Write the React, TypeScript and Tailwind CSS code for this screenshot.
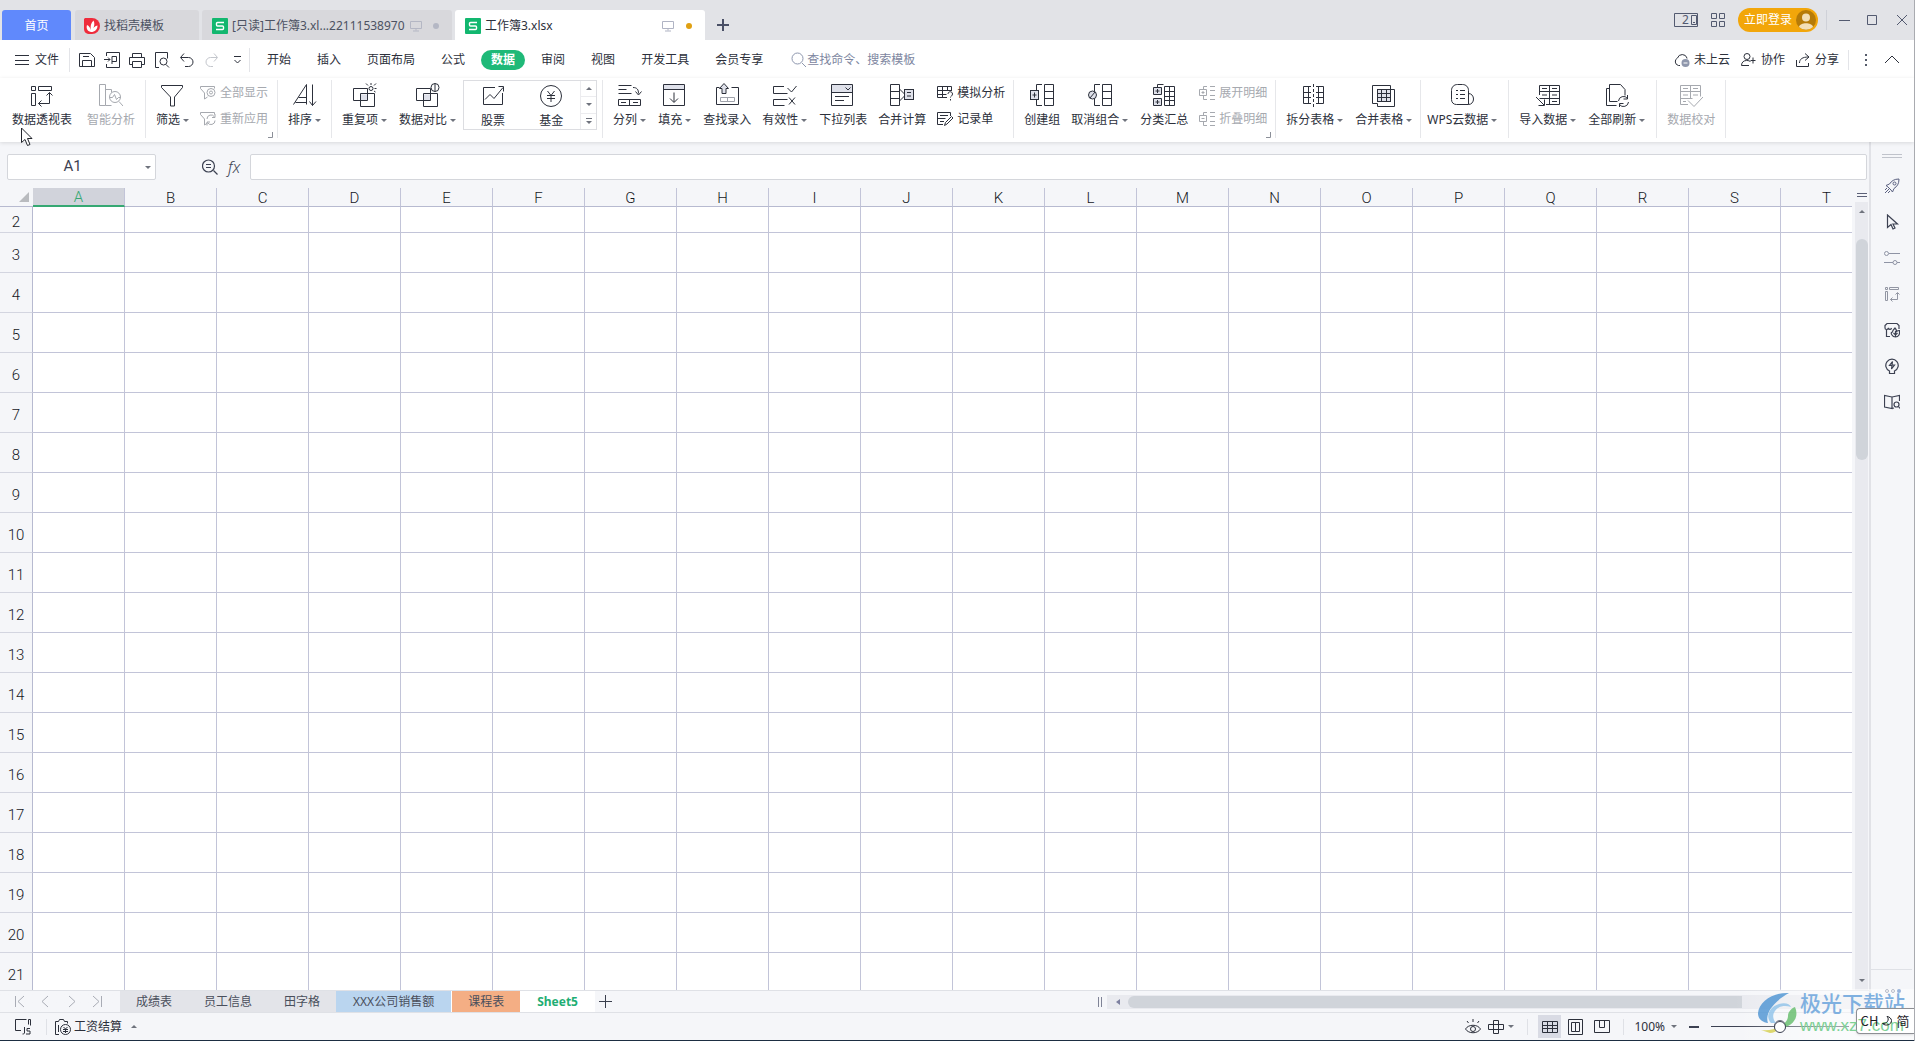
import React from "react";

type IconProps = { d?: string; size?: number; w?: number; h?: number; className?: string; sw?: number; children?: React.ReactNode };

function Icon({ d, size = 24, w, h, className = "", sw = 1, children }: IconProps) {
  const width = w ?? size;
  const height = h ?? size;
  return (
    <svg width={width} height={height} viewBox={`0 0 ${width} ${height}`} fill="none" stroke="currentColor" strokeWidth={sw} className={`shrink-0 ${className}`} aria-hidden="true">
      {d && <path d={d} />}
      {children}
    </svg>
  );
}

function Caret({ up = false }: { up?: boolean }) {
  return (
    <svg width="6" height="3" viewBox="0 0 6 3" className="shrink-0 fill-[#6f737d]" aria-hidden="true">
      <path d={up ? "M0 3L3 0L6 3Z" : "M0 0H6L3 3Z"} />
    </svg>
  );
}

const SHADE = "#dfe1ea";

const icons = {
  pivot: <Icon d="M1.5 3.5h4v4h-4zM8.5 3.5h13v4h-13zM1.5 10.5h4v12h-4zM19.5 9.5v11h-11M16.5 12.5l3-3 3 3M11.5 17.5l-3 3 3 3" />,
  smart: (
    <Icon d="M.5 1.5h6v21h-6zM6.5 6.5h6v3M6.5 22.5h6M20 18.5l4 4.500M10.500 14.500h3l2-3 2 5 2-2h2">
      <circle cx="16" cy="14" r="5.5" />
    </Icon>
  ),
  funnel: <Icon d="M.500 2.500h21v2l-8 9.500v9h-4v-9l-9-9.500z" />,
  sort: <Icon d="M.5 21.500L13.500 1.500v20M5.500 14.500h8M2.500 19.500h11M19.500 1.500v21M16.500 18.500l3 4 3.500-4" />,
  dup: (
    <Icon>
      <rect x="7.500" y="11.500" width="7" height="6" fill={SHADE} stroke="none" />
      <path d="M.500 5.500h14v12H.500zM7.500 10.500h14v13h-14z" />
      <circle cx="18" cy="5.500" r="2" fill="white" />
      <path d="M18 0v2M13 .500l2 2M23 .500l-2 2M21.500 5.500h2M21 8l1.500 1" />
    </Icon>
  ),
  compare: (
    <Icon>
      <rect x="7.500" y="11.500" width="7" height="6" fill={SHADE} stroke="none" />
      <path d="M.500 5.500h14v12H.500zM7.500 10.500h14v13h-14z" />
      <circle cx="19" cy="4.500" r="4" fill="white" />
      <path d="M19 .500v8" />
    </Icon>
  ),
  stock: <Icon d="M14 3.500H2.500v17h19V9M4 15.500l5-5 4 4 9-11M17.500 2.500h5v5" />,
  fund: (
    <Icon>
      <circle cx="12" cy="12" r="10.500" />
      <path d="M8.500 7l3.500 4.500L15.500 7M8 11.500h8M8 14.500h8M12 11.500V18" />
    </Icon>
  ),
  splitCol: <Icon d="M.5 2.500h13M.5 6.500h8M.5 10.500h13M15 4.500c4 0 5.500 2 5.500 6M17.500 8.500l3 3.500 3-3.500M.5 16.500h22v6H.5zM11.500 16.500v6M3 19.500h5M15 19.500h5" />,
  fill: (
    <Icon>
      <rect x="1" y="2" width="20" height="4" fill={SHADE} stroke="none" />
      <path d="M.500 1.500h21v21H.500zM.500 6.500h21M11 9.500v9.500M7 15.500l4 4 4-4" />
    </Icon>
  ),
  lookup: (
    <Icon>
      <path d="M4.500 4.500h-3v17h22v-17h-7" />
      <path d="M9 .500l4.500 5h-2.500v5H7v-5H4.500z" fill={SHADE} />
      <path d="M5.500 14.500h14v4h-14zM12.500 14.500v4" className="stroke-[#9fa2ab]" />
    </Icon>
  ),
  valid: <Icon d="M11 3.500H.5v7h14M14.500 16.500H.5v6h11M14.500 5l4 4 5-6M16 14.500l6 7M22 14.500l-6 7" />,
  dropdown: (
    <Icon>
      <rect x="1" y="2" width="20" height="7" fill={SHADE} stroke="none" />
      <path d="M.500 1.500h21v21H.500zM.500 9.500h21M14.500 4.500l2.500 2.500 2.500-2.500M4 13.500h14M4 17.500h9" />
    </Icon>
  ),
  consolidate: (
    <Icon>
      <path d="M.5 1.500h9v21h-9zM.5 8.500h9M.5 15.500h9M9.500 6l5 5M9.500 18l5-5" />
      <rect x="14.500" y="6.500" width="9" height="10" fill={SHADE} />
      <path d="M17 9.500h4M17 13h4" />
    </Icon>
  ),
  group: (
    <Icon>
      <path d="M12 1.500H6.500v21H12M14.500 1.500h9v21h-9zM14.500 8.500h9M14.500 15.500h9" />
      <rect x=".5" y="7.500" width="8" height="9" fill={SHADE} />
      <path d="M2.500 12h4M4.500 9.500v5" />
    </Icon>
  ),
  ungroup: (
    <Icon>
      <path d="M12 1.500H6.500v21H12M14.500 1.500h9v21h-9zM14.500 8.500h9M14.500 15.500h9" />
      <circle cx="4.500" cy="12" r="4" fill={SHADE} />
      <path d="M2 15l5-6" />
    </Icon>
  ),
  subtotal: (
    <Icon>
      <path d="M5.500 4V1.500h6M12.500 3.500h10v19h-10zM17.500 3.500v19M12.500 8.500h10M12.500 13.500h10M12.500 17.500h10" />
      <path d="M1.500 4.500h8v7h-8zM1.500 15.500h8v7h-8z" fill={SHADE} />
      <path d="M3.500 8h4M5.500 6v4M3.500 19h4M5.500 17v4" />
    </Icon>
  ),
  splitTable: (
    <Icon>
      <path d="M8 3.500H.500v17H8M.500 9.500H8M.500 14.500H8M13 3.500h7.500v17H13M13 9.500h7.500M13 14.500h7.500M5.500 3.500v17M15.500 3.500v17" />
      <path d="M10.500 1v23" strokeDasharray="3 2" />
    </Icon>
  ),
  mergeTable: (
    <Icon>
      <path d="M18.500 6.500V2.500H.500v18h5M18.500 6.500h4v17h-17v-3" />
      <rect x="5.500" y="6.500" width="13" height="12" fill={SHADE} />
      <path d="M5.500 10.500h13M5.500 14.500h13M9.500 6.500v12M14.500 6.500v12" />
    </Icon>
  ),
  cloudData: <Icon d="M17.500 21.500H5.500c-3 0-5-2-5-5V7.500c0-3.500 2.500-6 6-6h5c3.500 0 6 2.500 6 6zM17.500 10.500c3 0 5 2.500 5 5.500s-2 5.500-5 5.500M5 7.500h2M9 7.500h5M5 11.500h2M9 11.500h5M5 15.500h2M9 15.500h5" />,
  importData: <Icon d="M3.500 12V2.500h20v19H10M3.500 8.500h20M3.500 15.500h20M13.500 2.500v19M6 5.500h5M16 5.500h5M6 12h5M16 12h5M16 18.500h5M0 14l8 8M8.500 16.500v6h-6" />,
  refresh: <Icon d="M4.500 5.500h-3v17h10M4.500 1.500h11l4.500 5v6M4.500 1.500v17h8M13.500 18a5 5 0 0 1 9-2.500M22.500 12v4h-4M23.500 19a5 5 0 0 1-9 2.500M14.500 24.500v-4h4" />,
  proof: <Icon d="M9 21.500H1.500v-19h20v11M1.500 8.500h20M1.500 15.500h12M11.500 2.500v13M4 5.500h5M14 5.500h5M4 12h5M14 12h5M4 18.500h3M9 17.500l6 6L24 14" />,
};

const small = {
  showAll: (
    <Icon size={16} d="M4.500 8v6l3-2M.5 1.500h14v2M.5 1.500v2l4 4.500">
      <circle cx="11" cy="7.500" r="4" />
      <circle cx="11" cy="7.500" r="1.500" />
    </Icon>
  ),
  reapply: <Icon size={16} d="M4.500 8v6l3-2M.5 1.500h14v2M.5 1.500v2l4 4.500M7 8a4 4 0 0 1 7.500-2M15 3v3.500h-3M15 9.500a4 4 0 0 1-7.500 2M7 14.500V11h3" />,
  whatIf: <Icon size={16} d="M10 12.500H.5v-11h14V6M.5 5.500h14M.5 9.500h9M5.500 1.500v11M10.500 1.500v4M11 9c0-3 4.500-3 4.500 0 0 2-2 2-2 3.500M13.500 14v1.500" />,
  record: <Icon size={16} d="M6 13.500H.5v-12h13V5M3 4.500h8M.5 7.500h8M3 10.500h4M7.500 14.500l1-3 6-6 1.500 1.500-6 6z" />,
  expand: <Icon size={16} d="M8 1.500H4.500v3M4.500 10.500v4H8M.5 4.500h7v6h-7zM2.500 7.500h3M4 6v3M11 1.500h5M11 5.500h5M11 10.500h5M11 14.500h5" />,
  collapse: <Icon size={16} d="M8 1.500H4.500v3M4.500 10.500v4H8M.5 4.500h7v6h-7zM2.500 7.500h3M11 1.500h5M11 5.500h5M11 10.500h5M11 14.500h5" />,
};

function Tool({ icon, label, caret = false, off = false }: { icon: React.ReactNode; label: string; caret?: boolean; off?: boolean }) {
  return (
    <button disabled={off} className={`flex shrink-0 flex-col items-center gap-[5px] pt-[3px] ${off ? "text-[#a6a9af]" : "text-[#2c303b]"}`}>
      {icon}
      <span className="flex items-center whitespace-nowrap leading-4">
        {label}
        {caret && (
          <span className="ml-[3px] mr-px">
            <Caret />
          </span>
        )}
      </span>
    </button>
  );
}

function SmallTools({ items, off = false }: { items: [React.ReactNode, string][]; off?: boolean }) {
  return (
    <div className="flex shrink-0 flex-col gap-[10px] pt-[5px]">
      {items.map(([icon, label]) => (
        <button key={label} disabled={off} className={`flex items-center gap-1 whitespace-nowrap leading-4 ${off ? "text-[#a6a9af]" : "text-[#2c303b]"}`}>
          {icon}
          {label}
        </button>
      ))}
    </div>
  );
}

function Group({ className = "", corner = false, children }: { className?: string; corner?: boolean; children: React.ReactNode }) {
  return (
    <div className={`relative flex h-[58px] shrink-0 items-start border-r border-[#e6e7ea] ${className}`}>
      {children}
      {corner && <Icon size={6} d="M5.500 0v5.500H1" className="absolute bottom-0 right-1 text-[#8b8f98]" />}
    </div>
  );
}

function SheetLogo() {
  return (
    <svg width="16" height="16" viewBox="0 0 16 16" className="shrink-0" aria-hidden="true">
      <rect width="16" height="16" rx="1" fill="#12b76f" />
      <path d="M12 4.500H5.500a1 1 0 0 0-1 1V7a1 1 0 0 0 1 1h5a1 1 0 0 1 1 1v1.500a1 1 0 0 1-1 1H4" fill="none" stroke="white" strokeWidth="1.400" />
    </svg>
  );
}

const monitor = <Icon w={12} h={12} d="M.5 1.500h11v7H.5zM6 8.500v2M3 11h6" />;

function TitleBar() {
  return (
    <header className="flex h-10 items-end bg-[#e2e3e7] pl-0.5">
      <div role="tablist" className="flex h-[30px] items-stretch text-[#4c5262]">
        <button role="tab" className="w-[69px] rounded-t-[3px] bg-[#6089fc] pt-0.5 text-white">首页</button>
        <button role="tab" className="ml-1 flex w-[124px] items-center gap-1 rounded-t-[3px] bg-[#d8d8dc] pl-[9px] pt-0.5">
          <svg width="16" height="16" viewBox="0 0 16 16" aria-hidden="true">
            <path d="M1 0h7a8 8 0 0 1 0 16H6C2 16 0 14 0 11V1z" fill="#ef2c3c" />
            <path d="M7 14C3 13 2 10 3 7c2 1 3 2.500 4 5C6 8 7 5 9.500 2.500c1.500 3 1 6-1 9 1-2 2.500-3.500 5-4 0 4-2.500 6.500-6.500 6.500z" fill="white" />
          </svg>
          找稻壳模板
        </button>
        <button role="tab" className="ml-[3px] flex w-[250px] items-center gap-1 rounded-t-[3px] bg-[#d8d8dc] pl-[10px] pr-[13px] pt-0.5">
          <SheetLogo />
          <span className="w-[174px] whitespace-nowrap text-left">[只读]工作簿3.xl...22111538970</span>
          <span className="text-[#b4b7c4]">{monitor}</span>
          <span className="ml-auto size-[6px] rounded-full bg-[#b4b7c4]" />
        </button>
        <button role="tab" aria-selected="true" className="ml-[3px] flex w-[250px] items-center gap-1 rounded-t-[3px] bg-white pl-[10px] pr-[13px] pt-0.5 text-[#2c303b]">
          <SheetLogo />
          工作簿3.xlsx
          <span className="ml-auto mr-2 text-[#b0b4c4]">{monitor}</span>
          <span className="size-[6px] rounded-full bg-[#e0a012]" />
        </button>
      </div>
      <button aria-label="新建" className="ml-3 pb-[9px] text-[#4a5066]">
        <Icon size={12} sw={2} d="M6 0v12M0 6h12" />
      </button>
      <div className="ml-auto flex h-10 items-center text-[#535a70]">
        <button aria-label="设备" className="relative">
          <Icon w={24} h={14} d="M.5.5h23v13H.5zM17.500 2.500h5v9h-5zM19 9.500h2" />
          <span className="absolute left-2 top-0 leading-[14px]">2</span>
        </button>
        <button aria-label="应用" className="ml-[13px]">
          <Icon size={14} d="M.5.5h5v5h-5zM8.500.5h5v5h-5zM.5 8.500h5v5h-5zM8.500 8.500h5v5h-5z" />
        </button>
        <button className="ml-[13px] flex h-6 items-center gap-1 rounded-full bg-[#f2a60a] pl-1.5 pr-0.5 text-white">
          立即登录
          <svg width="20" height="20" viewBox="0 0 20 20" aria-hidden="true">
            <circle cx="10" cy="10" r="10" fill="#b67b08" />
            <circle cx="10" cy="7.500" r="4" fill="#f3dfb6" />
            <path d="M3 17c1-5 13-5 14 0a10 10 0 0 1-14 0z" fill="#f3dfb6" />
          </svg>
        </button>
        <span className="ml-2 h-5 w-px bg-[#cfd1d8]" />
        <button aria-label="最小化" className="ml-3"><Icon size={12} d="M0 6.500h11" /></button>
        <button aria-label="最大化" className="ml-4"><Icon size={12} d="M.5 1.500h9v9h-9z" /></button>
        <button aria-label="关闭" className="ml-[17px] mr-1.5"><Icon size={12} d="M1 1l10 10M11 1L1 11" /></button>
      </div>
    </header>
  );
}

const quick: [string, React.ReactNode][] = [
  ["保存", <Icon size={16} d="M.5 1.500h11l4 4v9H.5zM3.500 14.500v-6h9v6M4 4.500h6" />],
  ["输出PDF", <Icon size={16} d="M2.500 4V.5h13v15h-13V12M0 7.500h6M4 5.500l2 2-2 2M8 12V4.500h4.500v5H8" />],
  ["打印", <Icon size={16} d="M3.500 5.500v-4h9v4M3.500 12.500h-3v-7h15v7h-3M3.500 9.500h9v6h-9z" />],
  ["预览", (
    <Icon size={16} d="M5 15.500H1.500V.5h12v6M12 12.500l3 3">
      <circle cx="9.500" cy="9.500" r="3.500" />
    </Icon>
  )],
  ["撤销", <Icon size={16} d="M5 1.500l-3.500 4 3.500 4M2 5.500h7.500a4.500 4.500 0 0 1 0 9H6" />],
];

const menus = ["开始", "插入", "页面布局", "公式", "数据", "审阅", "视图", "开发工具", "会员专享"];

function MenuBar() {
  return (
    <nav className="flex h-[38px] items-center bg-white pl-[15px] pt-0.5 text-[#2c303b]">
      <button className="flex items-center gap-1.5">
        <Icon size={14} d="M0 2.500h14M0 7.500h14M0 11.500h14" />
        文件
      </button>
      <span className="ml-[10px] h-6 w-px bg-[#e3e4e8]" />
      <div className="ml-[9px] flex items-center gap-[9px]">
        {quick.map(([name, icon]) => (
          <button key={name} aria-label={name}>{icon}</button>
        ))}
        <button aria-label="恢复" className="text-[#c3c6cc]">
          <Icon size={16} d="M10 1.500l3.500 4-3.500 4M13 5.500H6.500a4.500 4.500 0 0 0 0 9H9" />
        </button>
        <button aria-label="更多"><Icon size={16} d="M5 4.500h7M5.500 8l3 3 3-3" /></button>
      </div>
      <span className="ml-1 h-6 w-px bg-[#e3e4e8]" />
      <div className="ml-[7px] flex items-center gap-1.5">
        {menus.map((m) => (
          <button key={m} className={m === "数据" ? "h-5 rounded-full bg-[#1fb978] px-[10px] font-bold text-white" : "h-5 whitespace-nowrap px-[10px]"}>{m}</button>
        ))}
      </div>
      <label className="ml-[18px] flex items-center text-[#8e97ae]">
        <Icon size={16} d="M11 11l4 4"><circle cx="6.500" cy="6.500" r="5.500" /></Icon>
        <input aria-label="搜索" placeholder="查找命令、搜索模板" className="w-[120px] bg-transparent outline-none placeholder:text-[#7d86a0]" />
      </label>
      <div className="ml-auto flex items-center">
        <button className="flex items-center gap-1">
          <Icon size={16} d="M6 13.500H4.500a4 4 0 0 1-1-7.500 5 5 0 0 1 9.500 0v.5">
            <circle cx="11.500" cy="11" r="4" fill="#8f97ac" stroke="none" />
            <path d="M9.500 11h4" className="stroke-white" />
          </Icon>
          未上云
        </button>
        <button className="ml-[11px] flex items-center gap-1">
          <Icon size={16} d="M8 13.500H.5C.5 10 3 8.500 5.500 8.500S9 9 9.500 10M12 5.500v6M9.500 8.500h5"><circle cx="6" cy="4.500" r="3" /></Icon>
          协作
        </button>
        <button className="ml-[10px] flex items-center gap-1">
          <Icon size={16} d="M1.500 8v6.500h12V11M4.500 11c0-4 3-6 9-6M10 1.500l4 3.500-4 3.500" />
          分享
        </button>
        <span className="ml-[9px] h-5 w-px bg-[#e3e4e8]" />
        <button aria-label="更多选项" className="ml-4 flex flex-col gap-[3px]">
          <span className="size-0.5 bg-[#555b6a]" />
          <span className="size-0.5 bg-[#555b6a]" />
          <span className="size-0.5 bg-[#555b6a]" />
        </button>
        <button aria-label="收起功能区" className="ml-[18px] mr-[15px]"><Icon size={14} d="M0 10l7-7 7 7" /></button>
      </div>
    </nav>
  );
}

function Ribbon() {
  return (
    <section className="relative z-10 flex h-16 bg-white pt-0.5 shadow-[0_1px_4px_rgba(0,0,0,0.12)]">
      <Group className="gap-[15px] pl-3 pr-[10px]">
        <Tool icon={icons.pivot} label="数据透视表" />
        <Tool icon={icons.smart} label="智能分析" off />
      </Group>
      <Group className="gap-[10px] pl-[10px] pr-[9px]" corner>
        <Tool icon={icons.funnel} label="筛选" caret />
        <SmallTools off items={[[small.showAll, "全部显示"], [small.reapply, "重新应用"]]} />
      </Group>
      <Group className="pl-[10px] pr-[9px]">
        <Tool icon={icons.sort} label="排序" caret />
      </Group>
      <Group className="gap-[11px] pl-[10px] pr-[5px]">
        <Tool icon={icons.dup} label="重复项" caret />
        <div className="flex gap-1.5">
          <Tool icon={icons.compare} label="数据对比" caret />
          <div className="flex h-[50px] w-[134px] border border-[#dcdde1] pl-[17px]">
            <div className="flex gap-[34px]">
              <Tool icon={icons.stock} label="股票" />
              <Tool icon={icons.fund} label="基金" />
            </div>
            <div className="ml-auto flex w-4 flex-col divide-y divide-[#ececef] border-l border-[#ececef]">
              <button aria-label="上一行" className="flex flex-1 items-center justify-center"><Caret up /></button>
              <button aria-label="下一行" className="flex flex-1 items-center justify-center"><Caret /></button>
              <button aria-label="展开" className="flex flex-1 flex-col items-center justify-center gap-0.5">
                <span className="h-px w-[6px] bg-[#6f737d]" />
                <Caret />
              </button>
            </div>
          </div>
        </div>
      </Group>
      <Group className="gap-[11px] pl-[10px] pr-[8px]">
        <Tool icon={icons.splitCol} label="分列" caret />
        <Tool icon={icons.fill} label="填充" caret />
        <Tool icon={icons.lookup} label="查找录入" />
        <Tool icon={icons.valid} label="有效性" caret />
        <Tool icon={icons.dropdown} label="下拉列表" />
        <Tool icon={icons.consolidate} label="合并计算" />
        <SmallTools items={[[small.whatIf, "模拟分析"], [small.record, "记录单"]]} />
      </Group>
      <Group className="gap-[11px] pl-[10px] pr-[8px]" corner>
        <Tool icon={icons.group} label="创建组" />
        <Tool icon={icons.ungroup} label="取消组合" caret />
        <Tool icon={icons.subtotal} label="分类汇总" />
        <SmallTools off items={[[small.expand, "展开明细"], [small.collapse, "折叠明细"]]} />
      </Group>
      <Group className="gap-[11px] pl-[10px] pr-[7px]">
        <Tool icon={icons.splitTable} label="拆分表格" caret />
        <Tool icon={icons.mergeTable} label="合并表格" caret />
      </Group>
      <Group className="pl-[6px] pr-[10px]">
        <Tool icon={icons.cloudData} label="WPS云数据" caret />
      </Group>
      <Group className="gap-[11px] px-[10px]">
        <Tool icon={icons.importData} label="导入数据" caret />
        <Tool icon={icons.refresh} label="全部刷新" caret />
      </Group>
      <Group className="px-[10px]">
        <Tool icon={icons.proof} label="数据校对" off />
      </Group>
    </section>
  );
}

function FormulaBar() {
  return (
    <div className="flex h-[46px] items-center pl-[7px] pr-0.5 pt-1 text-[#3c4152]">
      <div className="flex h-[26px] w-[149px] items-center rounded-[2px] border border-[#d4d6db] bg-white pr-1">
        <input aria-label="名称框" defaultValue="A1" className="w-full bg-transparent pr-2 text-center font-[Roboto] text-[15px] outline-none" />
        <button aria-label="名称列表"><Caret /></button>
      </div>
      <button aria-label="查看公式" className="ml-[46px]">
        <Icon size={16} d="M11.500 11.500l4 4M4 5.500h5M4 8.500h5" sw={1.2}><circle cx="6.500" cy="7" r="6" /></Icon>
      </button>
      <button aria-label="插入函数" className="ml-[10px] font-['Noto_Sans'] text-base font-light italic leading-5">fx</button>
      <input aria-label="编辑栏" className="ml-[10px] h-[26px] flex-1 rounded-[2px] border border-[#d4d6db] bg-white px-2 outline-none" />
    </div>
  );
}

const columns = "ABCDEFGHIJKLMNOPQRST".split("");
const rows = Array.from({ length: 20 }, (_, i) => i + 2);

function Grid() {
  return (
    <div className="min-w-0 flex-1 overflow-hidden">
      <table className="w-[1873px] table-fixed border-separate border-spacing-0 font-[Roboto] text-[15px] text-[#14161d]">
        <colgroup>
          <col className="w-[33px]" />
          {columns.map((c) => <col key={c} className="w-[92px]" />)}
        </colgroup>
        <thead>
          <tr className="h-[19px]">
            <th className="border-b border-[#b7bad0] p-0">
              <svg width="10" height="10" viewBox="0 0 10 10" className="ml-auto mr-1 fill-[#b9bbbf]" aria-hidden="true"><path d="M10 0V10H0Z" /></svg>
            </th>
            {columns.map((c) => (
              <th key={c} scope="col" className={c === "A" ? "border-b-2 border-r border-b-[#36a873] border-r-[#c2c4d8] bg-[#d1d3db] p-0 pt-0.5 font-light leading-[15px] text-[#36a873]" : "border-b border-r border-b-[#b7bad0] border-r-[#c2c4d8] p-0 pt-[3px] font-light leading-[15px]"}>{c}</th>
            ))}
          </tr>
        </thead>
        <tbody>
          {rows.map((r) => (
            <tr key={r} className={r === 2 ? "h-[26px]" : "h-10"}>
              <th scope="row" className="border-b border-r border-b-[#d3d5e0] border-r-[#b7bad0] p-0 pt-1 font-light leading-5">{r}</th>
              {columns.map((c) => <td key={c} className="border-b border-r border-[#c2c4d8] bg-white p-0" />)}
            </tr>
          ))}
        </tbody>
      </table>
    </div>
  );
}

function VerticalScroll() {
  return (
    <div className="ml-[3px] mr-px flex w-[13px] flex-col items-center text-[#5b6077]">
      <Icon w={10} h={14} d="M0 5.500h10M0 8.500h10" />
      <div className="flex w-full flex-1 flex-col items-center bg-[#e9eaef]">
        <button aria-label="向上滚动" className="flex h-[18px] items-center"><Caret up /></button>
        <div className="mt-[19px] h-[28%] w-3 rounded-full bg-[#d0d4da]" />
        <button aria-label="向下滚动" className="mt-auto flex h-5 items-center"><Caret /></button>
      </div>
    </div>
  );
}

const sheets: [string, string][] = [
  ["成绩表", "px-4 bg-[#e3e4e9]"],
  ["员工信息", "px-4 bg-[#e3e4e9]"],
  ["田字格", "px-4 bg-[#e3e4e9]"],
  ["XXX公司销售额", "px-[17px] bg-[#bad5ef]"],
  ["课程表", "px-4 bg-[#f4ae84] border-l border-white"],
  ["Sheet5", "px-[17px] bg-white font-bold text-[#1fae74]"],
];

function SheetBar() {
  return (
    <div className="flex h-[23px] items-stretch border-y border-[#dfe1e6] text-[#4a4f5c]">
      <div className="flex w-[120px] items-center gap-[13px] bg-gradient-to-r from-[#f5f6f9] to-[#f5f6f9] pl-[13px] text-[#a9acb5]">
        <button aria-label="第一张"><Icon size={13} d="M2.500 1v11M11 1L5 6.500 11 12" /></button>
        <button aria-label="上一张"><Icon size={13} d="M9 1L3 6.500 9 12" /></button>
        <button aria-label="下一张"><Icon size={13} d="M4 1l6 5.500L4 12" /></button>
        <button aria-label="最后一张"><Icon size={13} d="M2 1l6 5.500L2 12M10.500 1v11" /></button>
      </div>
      {sheets.map(([name, style]) => (
        <button key={name} className={`whitespace-nowrap ${style}`}>{name}</button>
      ))}
      <button aria-label="新建工作表" className="ml-1 text-[#3a3f4d]"><Icon size={13} d="M6.500 0v13M0 6.500h13" /></button>
      <div className="ml-auto flex w-[771px] items-center text-[#7f8396]">
        <Icon w={6} h={10} d="M.5 0v10M3.500 0v10" />
        <div className="ml-[3px] flex h-[14px] flex-1 items-center bg-[#e9eaef]">
          <button aria-label="向左滚动" className="flex w-[21px] justify-center">
            <svg width="4" height="6" viewBox="0 0 4 6" className="fill-[#7d80a0]" aria-hidden="true"><path d="M4 0V6L0 3Z" /></svg>
          </button>
          <div className="h-3 w-[614px] rounded-l-full bg-[#d0d4da]" />
        </div>
      </div>
    </div>
  );
}

function Sidebar() {
  return (
    <aside className="flex w-[45px] shrink-0 flex-col items-center border-l-2 border-[#e1e2e7] pr-0.5 pt-3 text-[#3c4152]">
      <Icon w={20} h={4} d="M0 .5h20M0 3.500h20" className="text-[#c0c3cb]" />
      <div className="mt-5 flex flex-col gap-5">
        <button aria-label="助手" className="text-[#5a6080]">
          <Icon size={16} d="M15 1C10 1 7.500 3 5.500 6L2 7.500l2 1.500 3 3 1.500 2L10 10.500C13 8.500 15 6 15 1zM1 12l2-2M1 15l4-4M4 15l2-2"><circle cx="10.500" cy="5.500" r="1.500" /></Icon>
        </button>
        <button aria-label="选择"><Icon size={16} sw={1.2} d="M3.500 1v12.500l3.500-3 2 4.500 2-1-2-4h4.500z" /></button>
        <button aria-label="属性" className="text-[#8f94a5]">
          <Icon size={16} d="M5 3.500h11M0 12.500h9M13 12.500h3"><circle cx="2.500" cy="3.500" r="2" /><circle cx="11" cy="12.500" r="2" /></Icon>
        </button>
        <button aria-label="透视表" className="text-[#9296a3]">
          <Icon size={16} d="M1.500 1.500h2v2h-2zM5.500 1.500h9v2h-9zM1.500 5.500h2v9h-2zM13.500 7v6.500h-7M11.500 8.500l2-2 2 2M8.500 11.500l-2 2 2 2" />
        </button>
        <button aria-label="模板">
          <Icon size={16} sw={1.2} d="M6 14.500H2.500V8M15 7V3.500l-2-2H3l-2 2V6c0 2 3 2 3.500 0 .5 2 2.500 2 3 0M8 13c-1.500-2-.5-3 .5-3 0-1 1-2.500 2.500-4 1 1 1.500 2 1.500 3.500 1-1 2-1 3-1 .5 4-1 6.500-4 6.500-2 0-3-1-3.500-2zM11.500 9v6M9.500 11l2 2 2-2" />
        </button>
        <button aria-label="灵感">
          <Icon size={16} sw={1.2} d="M5.500 15.500h5V13a6.200 6.200 0 1 0-5 0zM8.500 3.500l-3 4h2.500l-.5 3.500 3-4H8z" />
        </button>
        <button aria-label="查阅">
          <Icon size={16} sw={1.2} d="M8 3L.5 1.500v11.500L8 14.500zM8 3l7.500-1.500V7M8 14.500l2-.5M14.500 12.500L16 14.500"><circle cx="12.500" cy="10.500" r="2.500" /></Icon>
        </button>
      </div>
      <div className="mt-auto flex h-11 w-full items-center justify-center gap-0.5 border-t border-[#dfe1e6] pb-0.5 pl-0.5">
        <span className="size-1 rounded-full border border-[#6f7790]" />
        <span className="size-1 rounded-full border border-[#6f7790]" />
        <span className="size-1 rounded-full bg-[#2f66b5]" />
      </div>
    </aside>
  );
}

function StatusBar() {
  return (
    <footer className="flex h-7 items-center border-b border-[#1d2e42] bg-[#f5f6f9] pl-[15px] text-[#2c303b]">
      <button aria-label="宏"><Icon size={16} d="M6 11.500H.5v-11h11M13.500.5h2v6M13.500.5v5M9.500 8v6c0 1-2 1-2 1M15 9.500h-3v2.500h3V15h-4" /></button>
      <span className="ml-[15px] h-4 w-px bg-[#dfe1e6]" />
      <button className="ml-2 flex items-center">
        <Icon size={16} d="M4 15.500H.5V2.500h3l1-2h4l1 2h3v2M3.500 6v7" ><circle cx="10.500" cy="10.500" r="5" /><path d="M8.500 8l2 2 2-2M8 10.500h5M8 12.500h5M10.500 10v4" /></Icon>
        <span className="ml-[3px]">工资结算</span>
        <span className="ml-[9px]"><Caret up /></span>
      </button>
      <div className="ml-auto flex items-center">
        <button aria-label="护眼"><Icon size={16} d="M.5 10c3-5 12-5 15 0-3 5-12 5-15 0zM8 0v3M2 2l1.500 2M14 2l-1.500 2"><circle cx="8" cy="10" r="2.500" /></Icon></button>
        <button aria-label="阅读模式" className="ml-[7px] flex items-center gap-1">
          <Icon size={16} d="M5.500 1.500h5v13h-5zM.5 5.500h15v5H.5z" />
          <Caret />
        </button>
        <span className="ml-[13px] h-4 w-px bg-[#dfe1e6]" />
        <button aria-label="普通视图" className="ml-[10px] flex size-[23px] items-center justify-center bg-[#d9dbe4]"><Icon size={16} d="M.5 2.500h15v11H.5zM.5 6.500h15M.5 9.500h15M5.500 2.500v11M10.500 2.500v11" /></button>
        <button aria-label="页面布局" className="ml-[7px]"><Icon size={16} d="M.5.5h14v15H.5zM3.500 3.500h4v9h-4zM7.500 3.500h4v9h-4z" /></button>
        <button aria-label="分页预览" className="ml-[10px]"><Icon size={16} d="M.5 1.500h15v12H.5zM5.500 1.500v7M5.500 8.500h5M10.500 1.500v7" /></button>
        <span className="ml-[13px] h-4 w-px bg-[#dfe1e6]" />
        <button className="ml-[10px] flex items-center gap-1.5">100%<Caret /></button>
        <button aria-label="缩小" className="ml-3 h-0.5 w-[10px] bg-[#3c4152]" />
        <input
          type="range"
          aria-label="缩放"
          defaultValue={50}
          className="ml-3 mr-[65px] h-4 w-[138px] appearance-none bg-transparent [&::-webkit-slider-runnable-track]:h-px [&::-webkit-slider-runnable-track]:bg-[#3c4152] [&::-webkit-slider-thumb]:-mt-[6px] [&::-webkit-slider-thumb]:size-3 [&::-webkit-slider-thumb]:appearance-none [&::-webkit-slider-thumb]:rounded-full [&::-webkit-slider-thumb]:border [&::-webkit-slider-thumb]:border-[#3c4152] [&::-webkit-slider-thumb]:bg-white"
        />
      </div>
    </footer>
  );
}

function Watermark() {
  return (
    <div className="pointer-events-none absolute bottom-0 right-0 z-20 h-[52px] w-[179px]">
      <div className="absolute inset-x-0 bottom-px top-0 bg-gradient-to-r from-transparent via-white/50 to-white/50" />
      <svg width="46" height="42" viewBox="0 0 46 42" className="absolute left-5 top-[3px] opacity-80" aria-hidden="true">
        <path d="M34 1C18 0 4 10 3 21c0 6 4 9 10 10-3-8 3-20 21-30z" fill="#4b93d3" />
        <path d="M16 31c-6-6-2-16 8-19 6-2 11 0 12 3-6-2-13-1-16 4-3 4-2 9 1 12z" fill="#8fc3ea" />
        <path d="M40 15c5 11-3 22-21 22 9-3 14-8 14-13 0-3 2-7 7-9z" fill="#63bd69" />
        <path d="M6 38c9 1 17-1 23-7-2 6-9 10-14 10z" fill="#d6cf4a" />
      </svg>
      <svg width="12" height="12" viewBox="0 0 12 12" fill="white" stroke="#3c4152" className="absolute bottom-2 left-[39px]" aria-hidden="true">
        <circle cx="6" cy="6" r="5.500" />
      </svg>
      <span className="absolute left-[65px] top-[3px] whitespace-nowrap text-[21px] font-medium leading-[22px] text-[#7fb0e0]">极光下载站</span>
      <div className="absolute bottom-[7px] right-0 h-[26px] w-[58px] rounded-l-[4px] border border-r-0 border-[#8d8f94] bg-white shadow" />
      <span className="absolute left-[65px] top-[27px] font-['Liberation_Sans'] text-[17px] leading-5 text-[#7fd196]">www.xz7.com</span>
      <div className="absolute bottom-3 right-0 flex w-[58px] items-center justify-center gap-1 whitespace-nowrap font-['Noto_Sans_CJK_SC'] text-[13px] leading-4 text-[#1d2027]">
        CH
        <Icon size={10} d="M5 .5c3 3 0 7.500-4.500 7 3 3 9 1.500 9-3C9.500 2.500 7 .5 5 .5z" />
        简
      </div>
    </div>
  );
}

export default function App() {
  return (
    <div className="relative flex h-screen flex-col overflow-hidden border-r border-[#a9abb0] bg-[#f5f6f9] font-['Noto_Sans','Noto_Sans_CJK_SC',sans-serif] text-xs">
      <TitleBar />
      <MenuBar />
      <Ribbon />
      <div className="flex min-h-0 flex-1">
        <main className="flex min-w-0 flex-1 flex-col">
          <FormulaBar />
          <div className="flex min-h-0 flex-1">
            <Grid />
            <VerticalScroll />
          </div>
          <SheetBar />
        </main>
        <Sidebar />
      </div>
      <StatusBar />
      <Watermark />
      <svg width="13" height="20" viewBox="0 0 13 20" className="pointer-events-none absolute left-[21px] top-[127px] z-30" aria-hidden="true">
        <path d="M.5 1v14.500l3.500-3 2.500 6 2.500-1-2.500-6H11z" fill="white" stroke="#22252c" />
      </svg>
    </div>
  );
}
